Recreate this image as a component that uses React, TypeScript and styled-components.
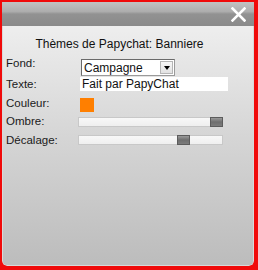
import React from "react";
import styled, { createGlobalStyle } from "styled-components";

const Global = createGlobalStyle`
  html, body { margin: 0; padding: 0; background: #ff0000; }
  body { font-family: "Liberation Sans", Arial, sans-serif; }
`;

const Frame = styled.div`
  width: 258px;
  height: 270px;
  box-sizing: border-box;
  background: #f00a0a;
  padding: 2px 4px 4px 2px;
  display: flex;
`;

const Window = styled.div`
  flex: 1;
  display: flex;
  flex-direction: column;
  border-radius: 0 0 5px 5px;
  overflow: hidden;
`;

const Header = styled.div`
  height: 24px;
  flex: none;
  display: flex;
  align-items: center;
  justify-content: flex-end;
  padding-right: 8px;
  background: linear-gradient(#c2c2c2 0%, #adadad 40%, #929292 50%, #8a8a8a 100%);
`;

const CloseIcon = styled.svg`
  width: 15px;
  height: 15px;
  display: block;
`;

const Body = styled.div`
  flex: 1;
  box-sizing: border-box;
  padding: 11px 0 0 3px;
  background: linear-gradient(#eeeeee 0%, #d6d6d6 45%, #bcbcbc 100%);
  border: 1px solid #d9d9d9;
  border-top: none;
  border-radius: 0 0 5px 5px;
  display: flex;
  flex-direction: column;
`;

const Title = styled.div`
  font-size: 12px;
  line-height: 14px;
  color: #111;
  text-align: center;
  padding-right: 20px;
`;

const Row = styled.div<{ $top: number; $h: number }>`
  display: flex;
  align-items: flex-start;
  margin-top: ${(p) => p.$top}px;
  height: ${(p) => p.$h}px;
`;

const Label = styled.div<{ $dy: number }>`
  width: 72px;
  flex: none;
  font-size: 11.5px;
  line-height: 12px;
  color: #1a1a1a;
  margin-top: ${(p) => p.$dy}px;
`;

const Select = styled.div`
  margin-left: 3px;
  margin-top: 1px;
  width: 94px;
  height: 17px;
  box-sizing: border-box;
  background: #fff;
  border: 1px solid #9a9a9a;
  border-top-color: #6a6a6a;
  border-left-color: #6a6a6a;
  display: flex;
  align-items: center;
  padding-right: 1px;
`;

const SelectText = styled.span`
  flex: 1;
  font-size: 12px;
  line-height: 14px;
  padding-left: 2px;
  color: #111;
`;

const SelectButton = styled.div`
  width: 13px;
  height: 13px;
  box-sizing: border-box;
  background: linear-gradient(#f6f6f6, #e2e2e2);
  border: 1px solid #b5b5b5;
  display: flex;
  align-items: center;
  justify-content: center;
`;

const Triangle = styled.div`
  width: 0;
  height: 0;
  border-left: 3px solid transparent;
  border-right: 3px solid transparent;
  border-top: 4px solid #000;
`;

const TextInput = styled.div`
  margin-left: 2px;
  width: 148px;
  height: 14px;
  background: #fff;
  font-size: 12px;
  line-height: 14px;
  padding-left: 2px;
  box-sizing: border-box;
  color: #111;
  white-space: nowrap;
`;

const Swatch = styled.div`
  margin-left: 2px;
  width: 14px;
  height: 14px;
  background: #ff7f00;
`;

const Track = styled.div`
  position: relative;
  width: 145px;
  height: 10px;
  box-sizing: border-box;
  background: linear-gradient(#f8f8f8, #efefef);
  border: 1px solid #c8c8c8;
`;

const Thumb = styled.div`
  position: absolute;
  top: -1px;
  width: 13px;
  height: 10px;
  box-sizing: border-box;
  background: linear-gradient(#9a9a9a 0%, #6e6e6e 50%, #7c7c7c 100%);
  border: 1px solid #5c5c5c;
`;

const Slider = ({ value }: { value: number }) => (
  <Track>
    <Thumb style={{ left: Math.round(value * 132) - 1 }} />
  </Track>
);

export default function App() {
  return (
    <>
      <Global />
      <Frame>
        <Window>
          <Header>
            <CloseIcon viewBox="0 0 15 15">
              <path d="M1.5 1.5 L13.5 13.5 M13.5 1.5 L1.5 13.5" stroke="#fff" strokeWidth="2.6" strokeLinecap="square" />
            </CloseIcon>
          </Header>
          <Body>
            <Title>Thèmes de Papychat: Banniere</Title>
            <Row $top={7} $h={19}>
              <Label $dy={-1}>Fond:</Label>
              <Select>
                <SelectText>Campagne</SelectText>
                <SelectButton>
                  <Triangle />
                </SelectButton>
              </Select>
            </Row>
            <Row $top={0} $h={14}>
              <Label $dy={1}>Texte:</Label>
              <TextInput>Fait par PapyChat</TextInput>
            </Row>
            <Row $top={7} $h={14}>
              <Label $dy={-1}>Couleur:</Label>
              <Swatch />
            </Row>
            <Row $top={5} $h={10}>
              <Label $dy={-2}>Ombre:</Label>
              <Slider value={1} />
            </Row>
            <Row $top={8} $h={10}>
              <Label $dy={-1}>Décalage:</Label>
              <Slider value={0.75} />
            </Row>
          </Body>
        </Window>
      </Frame>
    </>
  );
}
